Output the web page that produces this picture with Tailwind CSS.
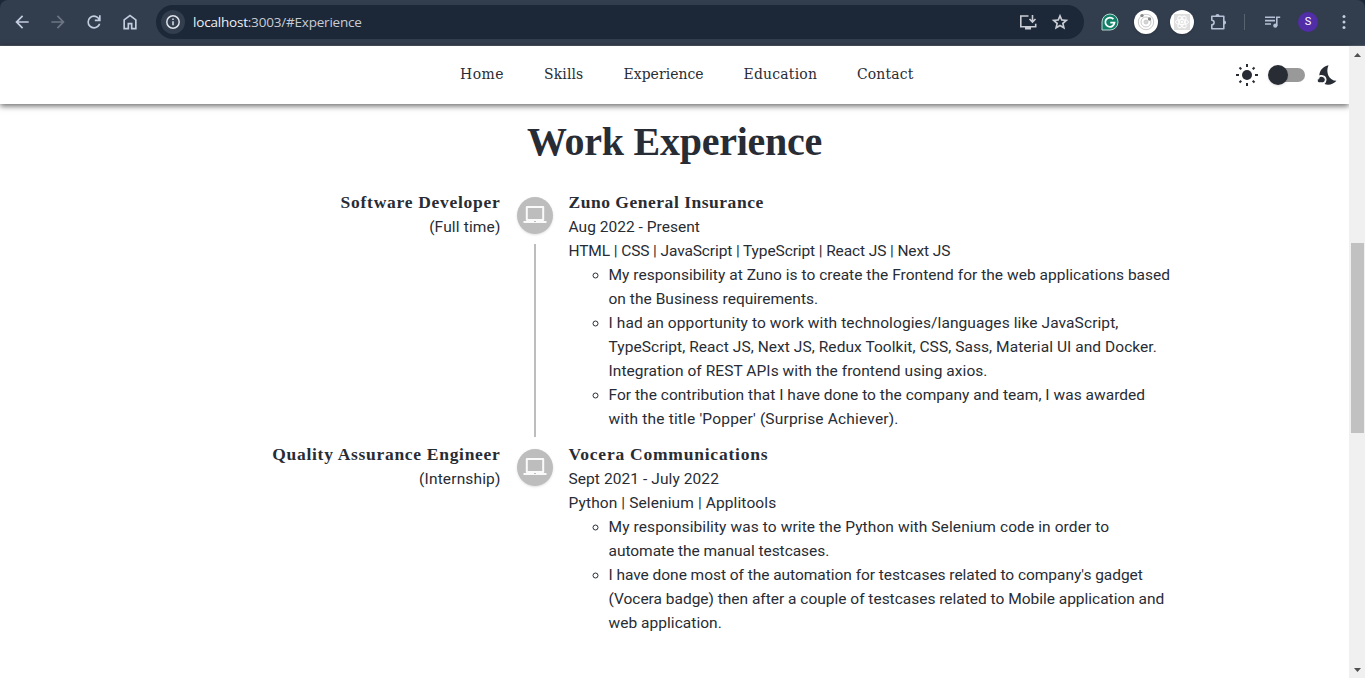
<!DOCTYPE html>
<html lang="en">
<head>
<meta charset="utf-8">
<title>Work Experience</title>
<script src="https://cdn.jsdelivr.net/npm/@tailwindcss/browser@4"></script>
</head>
<body class="flex h-[678px] w-[1365px] flex-col overflow-hidden bg-white text-[#282c34]">

<!-- Browser toolbar -->
<div class="bg-[#1c2737]">
<header class="flex h-[46px] items-center rounded-t-lg border-b border-[#4a5361] bg-[#323d4d] pb-px text-[#c3cde0]">
  <svg class="ml-3 size-5" viewBox="0 -960 960 960" fill="#c3cde0"><path d="m313-440 224 224-57 56-320-320 320-320 57 56-224 224h487v80H313Z"/></svg>
  <svg class="ml-4 size-5" viewBox="0 -960 960 960" fill="#6c7584"><path d="M647-440H160v-80h487L423-744l57-56 320 320-320 320-57-56 224-224Z"/></svg>
  <svg class="ml-4 size-5" viewBox="0 -960 960 960" fill="#c3cde0"><path d="M480-160q-134 0-227-93t-93-227q0-134 93-227t227-93q69 0 132 28.500T720-690v-110h80v280H520v-80h168q-32-56-87.500-88T480-720q-100 0-170 70t-70 170q0 100 70 170t170 70q77 0 139-44t87-116h84q-28 106-114 173t-196 67Z"/></svg>
  <svg class="ml-4 size-5" viewBox="0 -960 960 960" fill="#c3cde0"><path d="M240-200h120v-240h240v240h120v-360L480-740 240-560v360Zm-80 80v-480l320-240 320 240v480H520v-240h-80v240H160Z"/></svg>

  <div class="ml-4 flex h-[34px] w-[928px] items-center rounded-full bg-[#1c2737] pr-3.5 pl-[5px]">
    <span class="flex size-6 items-center justify-center rounded-full bg-[#323d4d]">
      <svg class="size-4" viewBox="0 0 16 16" fill="none" stroke="#dfe3ea" stroke-width="1.5"><circle cx="8" cy="8" r="6.200"/><path d="M8 7.200v4M8 4.600v1.500"/></svg>
    </span>
    <span class="ml-2 font-['Open_Sans'] text-[13.500px] leading-5 tracking-[-0.200px] whitespace-nowrap text-[#c7ccd4]"><span class="text-[#eef1f5]">localhost</span>:3003/#Experience</span>
    <svg class="ml-auto size-5" viewBox="0 0 20 20" fill="none" stroke="#c9cdd3" stroke-width="1.600"><path d="M10.500 4H2.800v10.700h14.900v-3M14.500 3v6.500M11.500 7l3 3 3-3"/><path d="M7 15h6v2.500H7z" fill="#c9cdd3" stroke="none"/></svg>
    <svg class="ml-3 size-5" viewBox="0 -960 960 960" fill="#c9cdd3"><path d="m354-287 126-76 126 77-33-144 111-96-146-13-58-136-58 135-146 13 111 97-33 143ZM233-120l65-281L80-590l288-25 112-265 112 265 288 25-218 189 65 281-247-149-247 149Z"/></svg>
  </div>

  <svg class="ml-[17px] size-[18px]" viewBox="0 0 18 18"><path d="M1 17V9a8 8 0 1 1 8 8Z" fill="#128069" stroke="#b9d5d2" stroke-width="1"/><path d="M12.400 6.200A4.600 4.600 0 1 0 13.500 9.700H9.300" fill="none" stroke="#fff" stroke-width="1.800"/></svg>
  <span class="ml-[15px] flex size-6 items-center justify-center rounded-full bg-white shadow">
    <svg class="size-5" viewBox="0 0 20 20" fill="none" stroke="#c9c9c9"><circle cx="10" cy="10" r="7.700"/><circle cx="10" cy="10" r="5"/><circle cx="10" cy="10" r="2" fill="#d4d4d4"/><circle cx="6" cy="3.600" r="1.700" fill="#888" stroke="none"/><circle cx="13.500" cy="7" r="1.700" fill="#888" stroke="none"/></svg>
  </span>
  <span class="ml-3 flex size-6 items-center justify-center rounded-full bg-white shadow">
    <svg class="size-4" viewBox="0 0 16 16" fill="none" stroke="#fff"><path d="M0 0h16v16H0z" fill="#dfdfdf" stroke="none"/><ellipse cx="8" cy="8" rx="6.500" ry="2.600"/><ellipse cx="8" cy="8" rx="6.500" ry="2.600" transform="rotate(60 8 8)"/><ellipse cx="8" cy="8" rx="6.500" ry="2.600" transform="rotate(120 8 8)"/><circle cx="8" cy="8" r="1" fill="#fff"/></svg>
  </span>
  <svg class="ml-[14px] size-5" viewBox="0 0 20 20" fill="none" stroke="#b5c1d6" stroke-width="1.600"><path d="M3.800 4.300h12v12.400h-12V12.800a2.300 2.300 0 0 0 0-4.600Z" stroke-linejoin="round"/><path d="M7.400 4.200a2.100 2.100 0 0 1 4.200 0ZM16 8.400a2.100 2.100 0 0 1 0 4.200Z" fill="#b5c1d6" stroke="none"/></svg>
  <span class="ml-4 h-4 w-px bg-[#59626f]"></span>
  <svg class="ml-[18px] size-5" viewBox="0 0 20 20" fill="none" stroke="#b5c1d6" stroke-width="1.600"><path d="M2 5.300h10M2 8.600h10M2 12h6M13.800 14V5.300h3.400"/><circle cx="12.300" cy="13.700" r="2.100" fill="#b5c1d6" stroke="none"/></svg>
  <span class="ml-[15px] flex size-5 items-center justify-center rounded-full bg-[#512da8] font-['Roboto'] text-[11px] text-white">S</span>
  <svg class="ml-6 h-4 w-1" viewBox="0 0 4 16" fill="#c3cde0"><circle cx="2" cy="2.500" r="1.500"/><circle cx="2" cy="8" r="1.500"/><circle cx="2" cy="13.500" r="1.500"/></svg>
</header>
</div>

<div class="flex min-h-0 flex-1">
  <div class="flex min-w-0 flex-1 flex-col">
    <!-- Site navigation -->
    <div class="flex h-[58px] shrink-0 items-center bg-white pl-[460px] shadow-[0_2px_6px_rgba(0,0,0,0.6)]">
      <nav class="flex gap-10 pb-0.5 font-['DejaVu_Serif_Condensed','DejaVu_Serif',serif] text-[15.500px] leading-6 whitespace-nowrap">
        <a class="w-11 tracking-[0.500px]">Home</a>
        <a class="w-[39.500px] tracking-[0.150px]">Skills</a>
        <a class="w-[80px] tracking-[0.050px]">Experience</a>
        <a class="w-[73.500px] tracking-[0.220px]">Education</a>
        <a class="w-14 tracking-[0.150px]">Contact</a>
      </nav>
      <div class="mr-[11px] ml-auto flex items-center">
        <svg class="size-6" viewBox="0 0 24 24" fill="none" stroke="#282c34" stroke-width="2"><circle cx="12" cy="12" r="5" fill="#282c34" stroke="none"/><path d="M12 1v3M12 20v3M1 12h3M20 12h3M4.500 4.500l1.800 1.800M17.700 17.700l1.800 1.800M4.500 19.500l1.800-1.800M17.700 6.300l1.800-1.800"/></svg>
        <span class="ml-3 flex h-3.5 w-[34px] items-center rounded-full bg-[#999]"><span class="-ml-[3px] size-5 shrink-0 rounded-full bg-[#282c34] shadow"></span></span>
        <svg class="ml-[11px] size-[22px]" viewBox="0 0 22 22" fill="#282c34"><path d="M12.500 1.200C7.500 2 3.600 6 3.300 11.500c2.800-1.200 5.900.2 6.700 2.100 1.200 2.300.2 5-1.500 6.500 4.800 1.500 9.500-.3 12-3.400C13 16.700 9.300 8.500 12.500 1.200Z"/><path d="M5.800 12.300c-2.400 0-3.200 1.300-2.900 2.300-2.200.5-2 4.200.8 4.200h2.800c4-.4 3.600-5.900-.7-6.500Z" stroke="#fff" stroke-width="1"/></svg>
      </div>
    </div>

    <main class="flex flex-1 flex-col">
      <h1 class="mt-[14px] h-12 text-center font-['Liberation_Serif',serif] text-[40px] leading-[48px] font-bold tracking-[-0.260px]">Work Experience</h1>

      <section class="mt-[24px] flex font-['Roboto',sans-serif] text-[15.500px] leading-6 tracking-[0.030px] whitespace-nowrap">
        <div class="w-[500.500px] text-right">
          <h2 class="mb-px font-['Liberation_Serif',serif] text-[17.500px] leading-6 font-bold tracking-[0.720px]">Software Developer</h2>
          <p class="tracking-[0.150px]">(Full time)</p>
        </div>
        <div class="ml-[16.500px] flex w-9 flex-col items-center pt-[7px]">
          <span class="flex h-[37px] w-9 items-center justify-center rounded-[50%] bg-[#bdbdbd] shadow-sm">
            <svg class="mb-0.5 h-6 w-6" viewBox="0 0 24 24"><path d="M3.800 4h16.400v13H3.800Z" fill="none" stroke="#fafafa" stroke-width="2" stroke-linejoin="round"/><path d="M.5 18h23v2H.5z" fill="#fafafa"/><path d="M11 18h2v1h-2z" fill="#bdbdbd"/></svg>
          </span>
          <span class="mt-2.5 h-[193px] w-0.5 bg-[#bdbdbd]"></span>
        </div>
        <div class="ml-[15.500px] h-[252px]">
          <h2 class="mb-px font-['Liberation_Serif',serif] text-[17.500px] leading-6 font-bold tracking-[0.520px]">Zuno General Insurance</h2>
          <p>Aug 2022 - Present</p>
          <p class="tracking-[-0.110px]">HTML | CSS | JavaScript | TypeScript | React JS | Next JS</p>
          <ul class="list-[circle] pl-10">
            <li>My responsibility at Zuno is to create the Frontend for the web applications based<br>on the Business requirements.</li>
            <li><span class="tracking-[0.100px]">I had an opportunity to work with technologies/languages like JavaScript,</span><br><span class="tracking-[0.060px]">TypeScript, React JS, Next JS, Redux Toolkit, CSS, Sass, Material UI and Docker.</span><br><span class="tracking-[0.060px]">Integration of REST APIs with the frontend using axios.</span></li>
            <li>For the contribution that I have done to the company and team, I was awarded<br><span class="tracking-[0.180px]">with the title 'Popper' (Surprise Achiever).</span></li>
          </ul>
        </div>
      </section>

      <section class="flex font-['Roboto',sans-serif] text-[15.500px] leading-6 tracking-[0.040px] whitespace-nowrap">
        <div class="w-[500.500px] text-right">
          <h2 class="mb-px font-['Liberation_Serif',serif] text-[17.500px] leading-6 font-bold tracking-[0.700px]">Quality Assurance Engineer</h2>
          <p class="tracking-[0.150px]">(Internship)</p>
        </div>
        <div class="ml-[16.500px] flex w-9 flex-col items-center pt-[7px]">
          <span class="flex h-[37px] w-9 items-center justify-center rounded-[50%] bg-[#bdbdbd] shadow-sm">
            <svg class="mb-0.5 h-6 w-6" viewBox="0 0 24 24"><path d="M3.800 4h16.400v13H3.800Z" fill="none" stroke="#fafafa" stroke-width="2" stroke-linejoin="round"/><path d="M.5 18h23v2H.5z" fill="#fafafa"/><path d="M11 18h2v1h-2z" fill="#bdbdbd"/></svg>
          </span>
        </div>
        <div class="ml-[15.500px]">
          <h2 class="mb-px font-['Liberation_Serif',serif] text-[17.500px] leading-6 font-bold tracking-[0.770px]">Vocera Communications</h2>
          <p class="tracking-[0.080px]">Sept 2021 - July 2022</p>
          <p class="tracking-[0.110px]">Python | Selenium | Applitools</p>
          <ul class="list-[circle] pl-10">
            <li><span class="tracking-[0.100px]">My responsibility was to write the Python with Selenium code in order to</span><br><span class="tracking-[-0.040px]">automate the manual testcases.</span></li>
            <li><span class="tracking-[-0.040px]">I have done most of the automation for testcases related to company's gadget</span><br><span class="tracking-[-0.010px]">(Vocera badge) then after a couple of testcases related to Mobile application and</span><br>web application.</li>
          </ul>
        </div>
      </section>
    </main>
  </div>

  <!-- Scrollbar -->
  <div class="flex w-4 flex-col items-center bg-[#f0f0f0]">
    <svg class="mt-[7px] h-1 w-[7px]" viewBox="0 0 7 4" fill="#505050"><path d="M0 4 3.500 0 7 4z"/></svg>
    <span class="mt-[186px] ml-px h-[190px] w-[13px] bg-[#c1c1c1]"></span>
    <svg class="mt-auto mb-1.5 h-1 w-[7px]" viewBox="0 0 7 4" fill="#505050"><path d="M0 0 3.500 4 7 0z"/></svg>
  </div>
</div>
</body>
</html>
